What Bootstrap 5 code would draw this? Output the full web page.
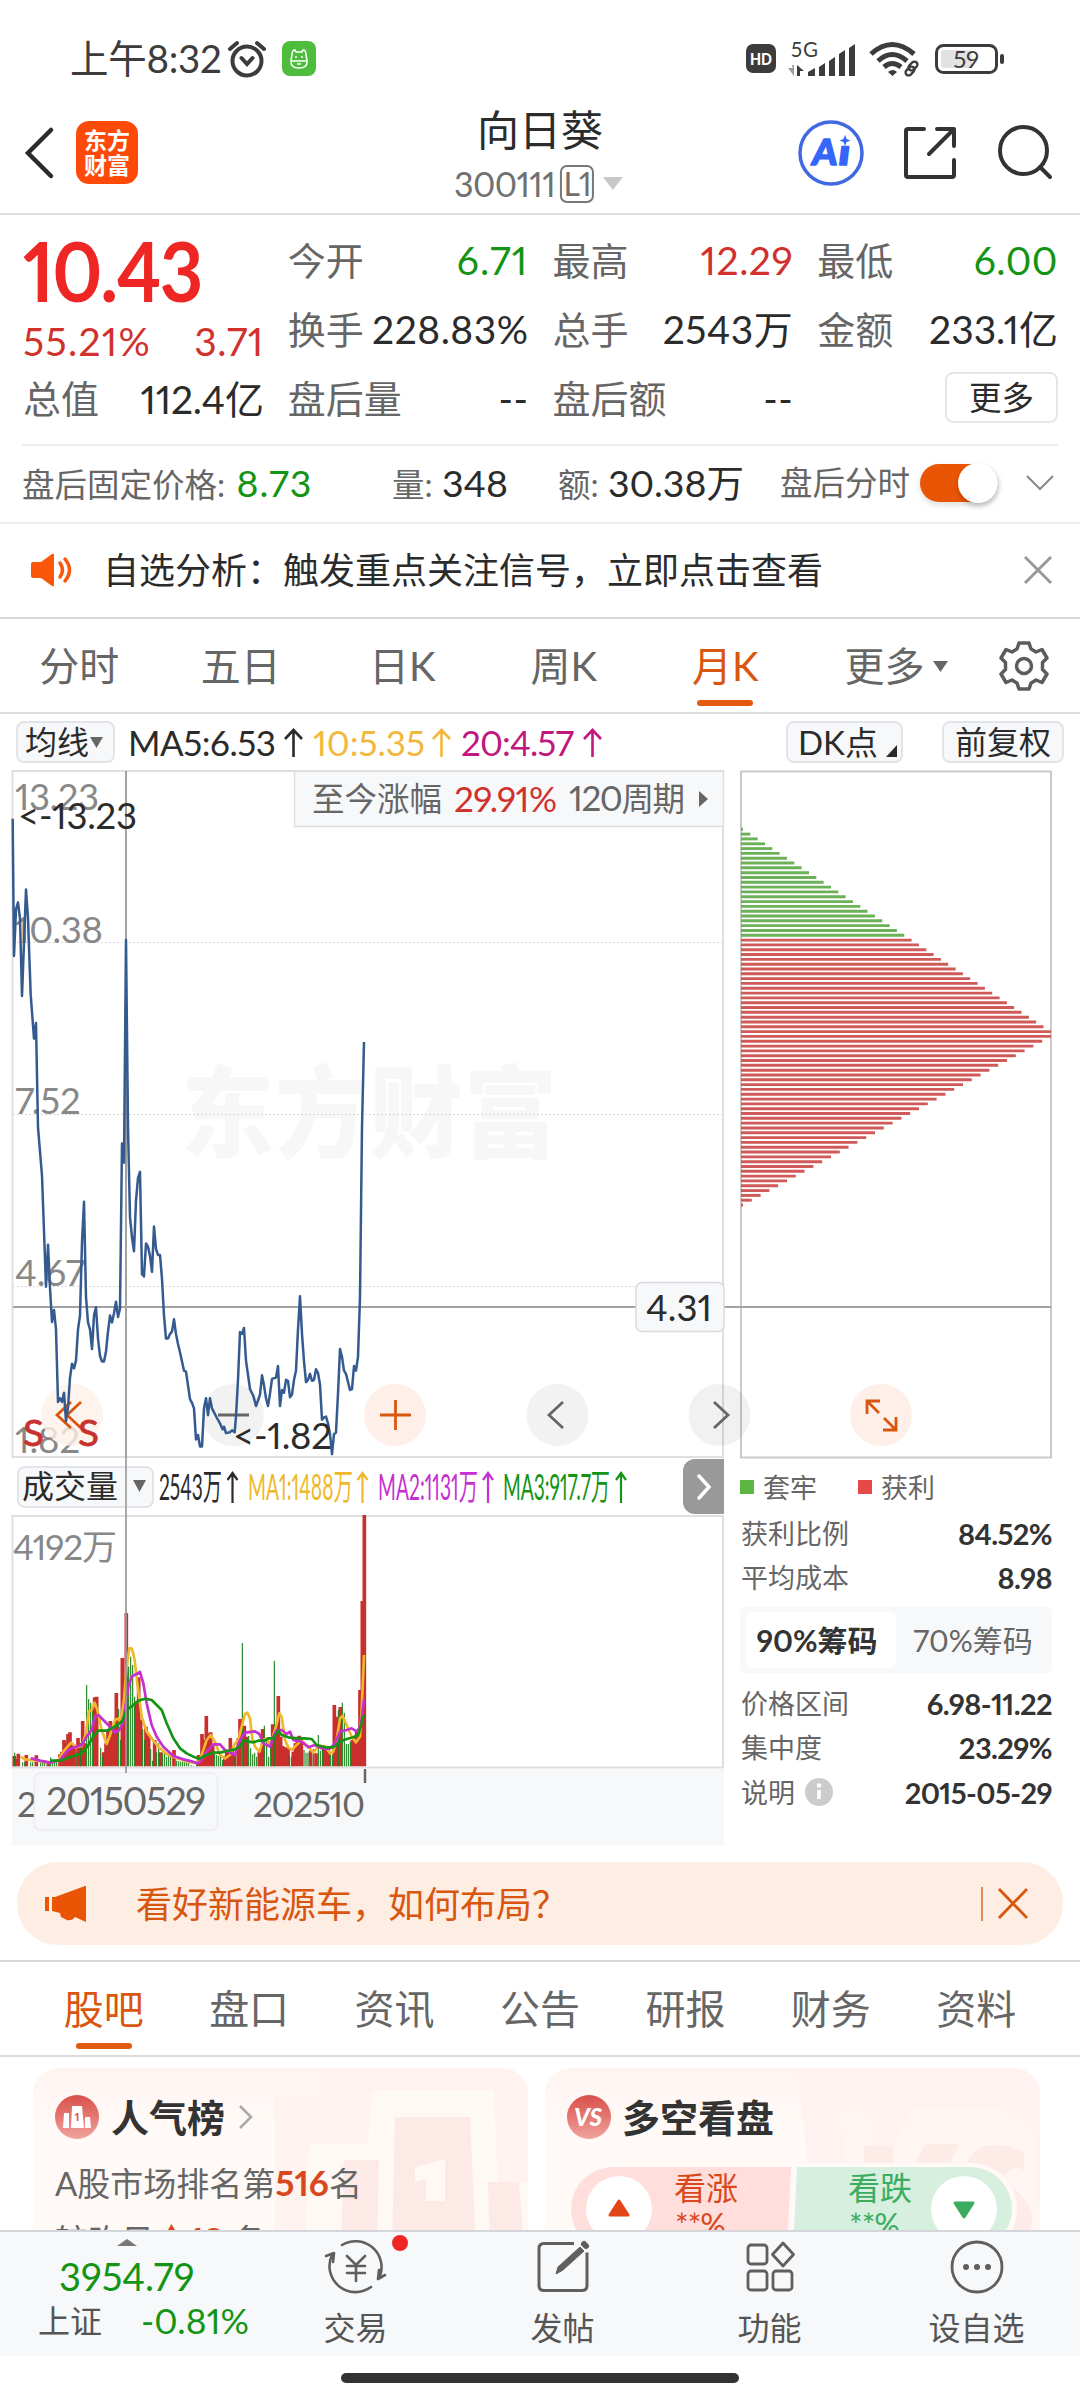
<!DOCTYPE html>
<html lang="zh-CN">
<head>
<meta charset="utf-8">
<meta name="viewport" content="width=device-width, initial-scale=1">
<title>向日葵 300111</title>
<link href="https://cdn.jsdelivr.net/npm/bootstrap@5.3.0/dist/css/bootstrap.min.css" rel="stylesheet">
<script src="https://cdn.jsdelivr.net/npm/bootstrap@5.3.0/dist/js/bootstrap.bundle.min.js"></script>
<style>
:root{--ink:#2b2b2b;--sub:#666;--up:#d0312d;--down:#149414;--brand:#d9560f}
body{width:1080px;height:2400px;overflow:hidden;background:#fff;color:var(--ink);font-family:Lato,"Noto Sans CJK SC",sans-serif;font-variant-numeric:proportional-nums;font-size:38px;line-height:1}
svg{display:block;flex:none;overflow:visible}
.c-sub{color:var(--sub)}.c-up{color:var(--up)}.c-down{color:var(--down)}.c-brand{color:var(--brand)}
.f32{font-size:32px}.f36{font-size:36px}
.statusbar{height:106px;padding:11px 75px 0 70px;color:#3c3c3c;font-size:38.5px;letter-spacing:-.3px}
.topbar{height:109px;border-bottom:2px solid #dcdcdc;padding:0 28px 0 25px}
.stock-name{font-size:42px;line-height:49px}
.stock-code{font-size:34px;height:57px;color:#707070;letter-spacing:-.6px}
.lv{border:2px solid #777;border-radius:7px;font-size:32px;height:38px;line-height:34px;width:34px;text-align:center;letter-spacing:-1px}
.quote{height:229px;padding:10px 23px 0;display:grid;grid-template-columns:repeat(4,1fr);column-gap:25px}
.quote .q-line{height:69px;white-space:nowrap}
.num{font-size:39px;letter-spacing:.5px;margin-right:-1px;position:relative;top:1px}
.price{font-size:82px;font-weight:700;color:#ee2624;height:86px;line-height:91px;letter-spacing:-2px;transform:scaleX(.92);transform-origin:0 0}
.more-btn{width:113px;height:51px;border:2px solid #e6e6e6;border-radius:8px;font-size:32.5px;line-height:45px;padding:0;color:var(--ink)}
.after{height:78px;margin:0 22px;border-top:2px solid #eee;font-size:32.5px;padding-bottom:2px}
.after b{font-weight:400;font-size:37.5px;color:var(--ink);margin-left:1px}
.after b.c-down{color:var(--down);letter-spacing:1px;margin-left:3px}
.knob{width:78px;height:38px;border-radius:19px;background:#e95504;box-shadow:0 3px 6px #0002}
.knob i{display:block;width:40px;height:40px;margin:-1px 0 0 auto;border-radius:50%;background:#fff;box-shadow:0 3px 5px #0003}
.notice{height:97px;border-top:2px solid #eee;border-bottom:2px solid #d8d8d8;padding:0 28px 2px 30px}
.k-tabs{height:95px;border-bottom:2px solid #dcdcdc;font-size:40px;color:var(--sub)}
.k-tabs .k-tab{width:161.5px;height:94px;line-height:94px;text-align:center;position:relative;left:-1.5px}
.k-tab.on,.s-tab.on{color:var(--brand)}
.k-tab.on::after,.s-tab.on::after{content:"";position:absolute;left:50%;bottom:7px;width:56px;height:6px;margin-left:-28px;border-radius:3px;background:#e25a10}
.ma-row{height:56px;padding:0 16px;font-size:34px}
.chip{background:#f7f8fa;border:2px solid #e3e4ea;border-radius:8px;height:42px;font-size:32px;color:var(--ink)}
.lower{height:388px}
.vol-head{height:57px;position:relative;padding-left:17px}
.vol-head .cross{position:absolute;left:125px;top:0;width:2px;height:57px;background:#aaa}
.vol-head .nextbtn{margin-left:auto;width:41px;height:55px;background:#999;border-radius:12px 0 0 12px}
.stats{width:312px;margin-left:16px;font-size:27px;color:var(--sub)}
.stats .s-row span{margin-left:1px}
.stats b{color:#333;font-size:29px;font-weight:700;letter-spacing:-.6px}
.stats .s-row{height:44.5px}
.sq{width:14px;height:14px;display:inline-block}
.seg{height:66px;background:#f7f8fa;border-radius:6px;padding:5px 6px;font-size:30px;margin:7px 0 8px}
.seg .seg-on{width:150px;height:56px;background:#fff;border-radius:6px;color:#333;font-weight:700;padding-right:8px}
.promo{height:83px;margin:16px 17px 0;border-radius:41px;background:#fdede3;color:var(--brand);padding:0 34px 0 28px}
.s-tabs{height:97px;margin-top:15px;border-top:2px solid #d8d8d8;border-bottom:2px solid #dcdcdc;padding:0 31px;font-size:40px;color:var(--sub)}
.s-tab{flex:1;height:93px;line-height:94px;text-align:center;position:relative}
.s-tab.on::after{bottom:6px}
.cards{height:173px;padding:11px 33px 0;overflow:hidden}
.tile{width:495px;height:230px;border-radius:26px;position:relative;overflow:hidden;background:linear-gradient(#fff4f2,#fffaf7 60px,#fffaf6)}
.tile>.bgart{position:absolute;right:0;top:0}
.tile .t-body{position:relative;padding:21px 22px}
.tile h5{font-size:38px;font-weight:700;color:#333;margin:0;line-height:56px}
.rank{font-size:33px;line-height:58px;height:57px;color:var(--sub)}
.rank b{color:#d9481c;font-size:35px}
.bottomnav{height:126px;border-top:2px solid #d5d6da;background:#f7f8fa;font-size:32px;color:#555}
.bottomnav .b-item{width:207px;text-align:center;position:relative}
.b-label{line-height:54px;margin-top:6px}
.reddot{position:absolute;left:140px;top:3px;width:16px;height:16px;border-radius:50%;background:#ee2624}
.homebar{width:398px;height:10px;border-radius:5px;background:#333;margin:17px auto 0}
</style>
</head>
<body>
<div class="statusbar d-flex align-items-center">
  <span>上午8:32</span>
  <svg style="margin-left:6px" width="40" height="38" viewBox="0 0 40 38" fill="none" stroke="#3c3c3c" stroke-width="4" stroke-linecap="round"><circle cx="20" cy="21" r="14.5"/><path d="M14.500 18l5.500 6 5.500-6M3 9l7-6M37 9l-7-6"/></svg>
  <svg style="margin-left:15px" width="34" height="35" viewBox="0 0 34 35"><rect width="34" height="35" rx="8" fill="#4fbd3c"/><g fill="none" stroke="#fff" stroke-width="1.500"><path d="M10 14q0-5 3-5l1 2h6l1-2q3 0 3 5l1 5v2q0 6-8 6t-8-6v-2zM9 20h16"/><path d="M14 15v2M20 15v2M15 23h4"/></g></svg>
  <svg class="ms-auto" width="30" height="29" viewBox="0 0 30 29"><rect width="30" height="29" rx="7" fill="#3c3c3c"/><text x="4" y="20.500" font-size="17" font-weight="900" fill="#fff" textLength="22" lengthAdjust="spacingAndGlyphs" letter-spacing="0">HD</text></svg>
  <svg style="margin-left:12px" width="68" height="38" viewBox="0 0 68 38" fill="#3c3c3c"><text x="3" y="16.500" font-size="20.500" textLength="27" letter-spacing="0">5G</text><path d="M0 28h6v8zM4 25h2v10z" opacity=".5"/><path d="M9 25l7 6h-4v5H9zM20 36v-4l7-4v8zM31 36V27l6-4v13zM41 36V21l6-4v19zM51 36V14l6-4v26zM61 36V8l6-4v32z"/></svg>
  <svg style="margin-left:13px" width="52" height="36" viewBox="0 0 52 36" fill="none" stroke="#3c3c3c" stroke-width="5"><path d="M2 13q21-19 43 0M9 20q14-13 29 0M15 26q8-7 17 0"/><path d="M19 31q5-4 9 0l-4.500 4z" fill="#3c3c3c" stroke="none"/><g stroke-width="2.400"><rect x="41" y="20" width="6" height="10" rx="3" transform="rotate(45 44 25)"/><rect x="38" y="25" width="6" height="10" rx="3" transform="rotate(45 41 30)"/></g></svg>
  <svg style="margin-left:14px" width="70" height="30" viewBox="0 0 70 30"><rect x="1.500" y="1.500" width="60" height="27" rx="7" fill="none" stroke="#3c3c3c" stroke-width="3"/><rect x="6" y="6" width="31" height="18" rx="3" fill="#e2e2e2"/><rect x="65" y="10" width="4" height="10" rx="2" fill="#3c3c3c"/><text x="31" y="23.500" font-size="24" fill="#3c3c3c" text-anchor="middle">59</text></svg>
</div>

<header class="topbar d-flex position-relative">
  <svg style="margin-top:22px" width="30" height="50" viewBox="0 0 30 50" fill="none" stroke="#2b2b2b" stroke-width="4.500" stroke-linecap="round"><path d="M26 2L3 25l23 23"/></svg>
  <svg style="margin:15px 0 0 21px" width="62" height="63" viewBox="0 0 62 63"><rect width="62" height="63" rx="13" fill="#fd4a08"/><g fill="#fff" font-size="23" font-weight="700" text-anchor="middle"><text x="31" y="28">东方</text><text x="31" y="53">财富</text></g></svg>
  <div class="position-absolute start-50 translate-middle-x text-center">
    <div class="stock-name">向日葵</div>
    <div class="stock-code d-flex align-items-center justify-content-center"><span>300111</span><span class="lv" style="margin-left:5px">L1</span><svg style="margin:0 3px 0 9px" width="20" height="13"><path d="M0 0h20L10 13z" fill="#c8c8c8"/></svg></div>
  </div>
  <svg class="ms-auto" style="margin-top:15px" width="254" height="66" viewBox="798 121 254 66" fill="none" stroke="#333" stroke-width="4" stroke-linecap="round" stroke-linejoin="round"><circle cx="831" cy="153" r="31" stroke="#4169e1" stroke-width="3.500"/><g fill="#3466fa" stroke="#3466fa" stroke-width="1.500" font-size="36" font-weight="900"><text transform="translate(811 165) skewX(-7)" textLength="25" lengthAdjust="spacingAndGlyphs">A</text><text transform="translate(837 165) skewX(-7)" textLength="12" lengthAdjust="spacingAndGlyphs">ı</text></g><path d="M845 135l1.600 3.900 3.900 1.600-3.900 1.600-1.600 3.900-1.600-3.900-3.900-1.600 3.900-1.600z" fill="#3466fa" stroke="none"/><path d="M924 129h-16q-2 0-2 2v44q0 2 2 2h44q2 0 2-2v-15M937 129h17v17M953 130l-24 24"/><circle cx="1023.500" cy="150.500" r="23.500"/><path d="M1040 167l10 10"/></svg>
</header>

<section class="quote">
  <div>
    <div class="price">10.43</div>
    <div class="d-flex justify-content-between align-items-center c-up" style="height:58px"><span class="num" style="letter-spacing:1.3px">55.21%</span><span class="num">3.71</span></div>
    <div class="d-flex justify-content-between align-items-center" style="height:58px"><span class="c-sub">总值</span><span class="num" style="letter-spacing:-.2px">112.4亿</span></div>
  </div>
  <div>
    <div class="q-line d-flex justify-content-between align-items-center"><span class="c-sub">今开</span><span class="c-down num" style="letter-spacing:1.2px">6.71</span></div>
    <div class="q-line d-flex justify-content-between align-items-center"><span class="c-sub">换手</span><span class="num">228.83%</span></div>
    <div class="q-line d-flex justify-content-between align-items-center"><span class="c-sub">盘后量</span><span class="num">--</span></div>
  </div>
  <div>
    <div class="q-line d-flex justify-content-between align-items-center"><span class="c-sub">最高</span><span class="c-up num">12.29</span></div>
    <div class="q-line d-flex justify-content-between align-items-center"><span class="c-sub">总手</span><span class="num">2543万</span></div>
    <div class="q-line d-flex justify-content-between align-items-center"><span class="c-sub">盘后额</span><span class="num">--</span></div>
  </div>
  <div>
    <div class="q-line d-flex justify-content-between align-items-center"><span class="c-sub">最低</span><span class="c-down num">6.00</span></div>
    <div class="q-line d-flex justify-content-between align-items-center"><span class="c-sub">金额</span><span class="num" style="letter-spacing:0">233.1亿</span></div>
    <div class="q-line d-flex justify-content-end align-items-center"><button class="btn more-btn" style="margin-right:-1px">更多</button></div>
  </div>
</section>

<section class="after d-flex align-items-center c-sub text-nowrap">
  <span style="width:370px">盘后固定价格: <b class="c-down">8.73</b></span>
  <span style="width:166px">量: <b>348</b></span>
  <span style="width:222px">额: <b>30.38万</b></span>
  <span style="width:140px">盘后分时</span>
  <span class="knob"><i></i></span>
  <svg class="ms-auto me-1" width="28" height="16" viewBox="0 0 28 16" fill="none" stroke="#888" stroke-width="2"><path d="M1 1l13 13L27 1"/></svg>
</section>

<section class="notice d-flex align-items-center f36">
  <svg width="44" height="36" viewBox="0 0 44 36"><path d="M3 10h8L22 2q2-1 2 1v30q0 2-2 1L11 26H3q-2 0-2-2V12q0-2 2-2z" fill="#fb560a"/><path d="M30 11q5 7 0 14M35 7q9 11 0 22" fill="none" stroke="#fb560a" stroke-width="3.500" stroke-linecap="round"/></svg>
  <span style="margin-left:29px">自选分析：触发重点关注信号，立即点击查看</span>
  <svg class="ms-auto" width="28" height="28" viewBox="0 0 28 28" stroke="#999" stroke-width="3"><path d="M1 1l26 26M27 1L1 27"/></svg>
</section>

<nav class="k-tabs d-flex">
  <div class="k-tab">分时</div><div class="k-tab">五日</div><div class="k-tab">日K</div><div class="k-tab">周K</div><div class="k-tab on">月K</div>
  <div class="k-tab d-flex align-items-center justify-content-center" style="width:180px">更多<svg class="ms-2" width="15" height="11"><path d="M0 0h15L7.500 11z" fill="#666"/></svg></div>
  <svg style="margin:21px 0 0 11px" width="50" height="52" viewBox="-25 -26 50 52" fill="none" stroke="#5c5c5c" stroke-width="3.500" stroke-linejoin="round"><path d="M-5-23H5L7-17Q9-16 12-14L18-16.500 23-8 18.500-3.500V3.500L23 8 18 16.500 12 14Q9 16 7 17L5 23H-5L-7 17Q-9 16-12 14L-18 16.500-23 8-18.500 3.500V-3.500L-23-8-18-16.500-12-14Q-9-16-7-17Z"/><circle r="7.500"/></svg>
</nav>

<div class="ma-row d-flex align-items-center text-nowrap">
  <span class="chip d-flex align-items-center" style="width:99px;padding-left:7px">均线<svg style="margin-left:1px" width="13" height="11"><path d="M0 0h13L6.500 11z" fill="#666"/></svg></span>
  <svg style="margin-left:13px" width="480" height="40" viewBox="128 722 480 40" font-size="35"><text x="128" y="756" fill="#2b2b2b" textLength="148">MA5:6.53</text><text x="313" y="756" fill="#f0b83c" textLength="112">10:5.35</text><text x="461" y="756" fill="#c0187e" textLength="113">20:4.57</text><g fill="none" stroke-width="2.600"><path stroke="#2b2b2b" d="M293.500 757V731M285 739l8.500-9 8.500 9"/><path stroke="#f0b83c" d="M441.500 757V731M433 739l8.500-9 8.500 9"/><path stroke="#c0187e" d="M592.500 757V731M584 739l8.500-9 8.500 9"/></g></svg>
  <span class="chip d-flex align-items-center ms-auto" style="width:117px;padding-left:10px;font-size:33px">DK点<svg class="align-self-end mb-1" style="margin-left:8px" width="11" height="12"><path d="M11 0v12H0z" fill="#2b2b2b"/></svg></span>
  <span class="chip d-flex align-items-center justify-content-center" style="width:122px;margin-left:39px">前复权</span>
</div>

<svg width="1080" height="688" viewBox="0 770 1080 688" font-size="36.500">
  <g transform="translate(181 1150) scale(1 1.08)"><text font-size="93" font-weight="900" fill="#f7f7f7" textLength="376">东方财富</text></g>
  <g fill="none" stroke="#d8d8d8" stroke-width="1.200" stroke-dasharray="2 2"><path d="M13 942.500H723M13 1114.500H723M13 1286.500H723"/></g>
  <path fill="none" stroke="#dfdfe1" stroke-width="2" d="M12.500 771H723V1457H12.500Z"/>
  <path fill="none" stroke="#c9c9c9" stroke-width="2" d="M741 771.500H1051V1457.500H741Z"/>
  <g id="chips" stroke-width="2.900"></g>
  <path stroke="#a2a2a2" stroke-width="2" d="M126 771V1458M13 1307H1051"/>
  <g fill="#888"><text x="15" y="810" textLength="84">13.23</text><text x="15" y="943" textLength="88">10.38</text><text x="15" y="1114">7.52</text><text x="15" y="1286">4.67</text><text x="15" y="1453">1.82</text></g>
  <g fill="none"><circle cx="72" cy="1415" r="31" fill="#fef0e8" fill-opacity=".8"/><circle cx="233" cy="1415" r="31" fill="#f2f2f2"/><circle cx="395" cy="1415" r="31" fill="#fef0e8"/><circle cx="557.500" cy="1415" r="31" fill="#f2f2f2"/><circle cx="719.500" cy="1415" r="31" fill="#000" fill-opacity=".055"/><circle cx="881" cy="1415" r="31" fill="#fef0e8"/>
  <g stroke-width="2.800"><path stroke="#d9560f" d="M71 1402l-14 13 14 13M81 1402l-14 13 14 13M380 1415h31M395.500 1400v30M867 1414v-13h13M867 1401l12 12M896 1417v13h-13M896 1430l-12-12"/><path stroke="#666" d="M218 1415h31M563 1402l-14 13 14 13M714 1402l14 13-14 13"/></g></g>
  <g transform="translate(0 760) scale(.33333 .45915)"><path vector-effect="non-scaling-stroke" fill="none" stroke="#345a90" stroke-width="2.500" stroke-linejoin="round" d="M38 128 42 427 48 325 54 310 60 345 66 514 78 282 84 345 92 510 102 607 108 573 114 800 126 905 138 1147 144 1056 150 1150 156 1224 162 1198 168 1240 174 1398 180 1390 186 1398 192 1378 198 1440 204 1410 210 1345 216 1315 222 1325 228 1308 234 1240 240 1210 246 1050 252 962 258 1170 264 1225 270 1240 276 1283 282 1210 288 1192 294 1260 300 1298 306 1310 312 1310 318 1288 324 1245 330 1210 336 1225 342 1205 348 1180 354 1213 360 1195 366 835 372 877 378 392 384 800 390 995 396 1040 402 1070 408 960 414 910 420 897 426 1120 432 1125 438 1053 444 1060 450 1080 456 1115 462 1016 468 1065 474 1078 480 1078 486 1130 492 1210 498 1260 504 1260 510 1250 516 1245 522 1218 528 1250 534 1272 540 1290 546 1310 552 1330 558 1332 564 1362 570 1392 576 1400 582 1412 588 1480 594 1470 600 1495 606 1495 612 1412 618 1390 624 1427 630 1390 636 1412 650 1432 660 1445 668 1458 672 1452 678 1466 690 1464 696 1460 704 1464 708 1430 714 1350 720 1246 726 1250 732 1237 738 1308 750 1370 760 1385 768 1407 774 1395 780 1382 786 1340 792 1362 798 1390 804 1407 810 1380 816 1348 828 1345 834 1320 840 1407 846 1372 852 1378 858 1350 864 1352 870 1388 876 1382 882 1350 888 1330 894 1240 900 1168 906 1250 912 1310 918 1355 924 1350 930 1337 936 1352 942 1350 948 1327 954 1335 960 1360 966 1437 972 1432 978 1430 984 1445 990 1468 996 1512 1002 1468 1008 1465 1014 1380 1020 1283 1026 1300 1032 1330 1038 1337 1050 1372 1056 1370 1062 1320 1068 1330 1074 1300 1080 1170 1086 800 1092 614"/></g>
  <g fill="#2b2b2b"><text x="18" y="829" textLength="119">&lt;-13.23</text><text x="233" y="1449" textLength="99">&lt;-1.82</text></g>
  <g fill="#c8312e" stroke="#c8312e" stroke-width=".8"><text x="23" y="1446" textLength="21" lengthAdjust="spacingAndGlyphs">S</text><text x="78" y="1446" textLength="21" lengthAdjust="spacingAndGlyphs">S</text></g>
  <g font-size="32.500" fill="#666"><rect x="294.500" y="771.500" width="429" height="55" fill="#f7f8fa" stroke="#dfdfe1" stroke-width="1.500"/><text x="312" y="811">至今涨幅</text><text x="454" y="812" font-size="35" fill="#d0312d" textLength="103">29.91%</text><text x="569" y="811" textLength="116"><tspan font-size="35">120</tspan>周期</text><path d="M699 791v16l9-8z"/></g>
  <rect x="636" y="1282.500" width="88" height="49" rx="6" fill="#f7f8fa" stroke="#d8dade" stroke-width="1.500"/><text x="646" y="1321" fill="#2b2b2b" textLength="66">4.31</text>
</svg>

<div class="lower d-flex">
  <div style="width:724px">
    <div class="vol-head d-flex align-items-center">
      <span class="chip d-flex align-items-center" style="width:137px;padding:0 0 1px 3px">成交量<svg style="margin-left:15px" width="13" height="12"><path d="M0 0h13L6.500 12z" fill="#666"/></svg></span>
      <svg style="margin-left:4px" width="480" height="44" viewBox="158 1465 480 44" font-size="36"><g><text x="159" y="1500" fill="#2b2b2b" textLength="63" lengthAdjust="spacingAndGlyphs">2543万</text><text x="248" y="1500" fill="#efb82a" textLength="105" lengthAdjust="spacingAndGlyphs">MA1:1488万</text><text x="378" y="1500" fill="#c62fd0" textLength="100" lengthAdjust="spacingAndGlyphs">MA2:1131万</text><text x="503" y="1500" fill="#149414" textLength="107" lengthAdjust="spacingAndGlyphs">MA3:917.7万</text></g><g fill="none" stroke-width="2.200"><path stroke="#2b2b2b" d="M232.500 1503v-29M227.500 1480l5-7 5 7"/><path stroke="#efb82a" d="M362.500 1503v-29M357.500 1480l5-7 5 7"/><path stroke="#c62fd0" d="M488 1503v-29M483 1480l5-7 5 7"/><path stroke="#149414" d="M621 1503v-29M616 1480l5-7 5 7"/></g></svg>
      <span class="nextbtn d-flex align-items-center justify-content-center"><svg width="16" height="26" viewBox="0 0 16 26" fill="none" stroke="#fff" stroke-width="3.500" stroke-linecap="round"><path d="M3 2l10 11L3 24"/></svg></span>
      <i class="cross"></i>
    </div>
    <svg width="724" height="331" viewBox="0 1515 724 331">
      <rect x="12" y="1769" width="712" height="77" fill="#f7f8fa"/>
      <path d="M12.500 1516H723V1767.500H12.500Z" fill="none" stroke="#dfdfe1" stroke-width="2"/>
      <g transform="translate(0 1510) scale(.33333)" fill="none" stroke-linejoin="round">
        <path stroke="#c9302c" stroke-width="11" d="M43 769V738M49 769V747M55 769V731M79 769V735M109 769V736M145 769V757M180 769V733M186 769V725M192 769V690M198 769V700M204 769V672M210 769V667M216 769V700M222 769V715M234 769V684M240 769V700M248 769V633M254 769V700M284 769V562M290 769V560M311 769V727M318 769V700M324 769V660M331 769V633M339 769V655M349 769V549M367 769V444M373 769V500M379 769V309M409 769V575M416 769V502M422 769V629M438 769V650M446 769V672M464 769V690M482 769V727M522 769V720M596 769V735M606 769V672M612 769V690M619 769V618M625 769V670M632 769V667M638 769V705M674 769V738M680 769V725M691 769V684M697 769V715M703 769V735M715 769V684M720 769V627M733 769V647M739 769V680M778 769V725M788 769V657M818 769V643M829 769V660M835 769V558M842 769V680M848 769V708M856 769V712M864 769V715M880 769V725M886 769V700M892 769V680M898 769V677M904 769V685M932 769V722M948 769V730M972 769V710M978 769V712M985 769V715M1003 769V585M1010 769V620M1021 769V591M1057 769V690M1063 769V680M1070 769V665M1080 769V540M1087 769V273M1093 769V15"/>
        <path stroke="#197f19" stroke-width="3.300" d="M44 769V728M68 769V757M74 769V757M92 769V757M98 769V757M122 769V758M128 769V757M134 769V758M152 769V742M158 769V757M164 769V757M170 769V757M228 769V728M242 769V700M260 769V525M266 769V568M272 769V578M278 769V590M302 769V713M308 769V740M356 769V597M362 769V690M386 769V470M392 769V440M398 769V465M404 769V560M428 769V658M434 769V690M452 769V717M458 769V752M470 769V727M476 769V700M488 769V730M494 769V727M500 769V740M506 769V733M512 769V738M530 769V752M536 769V754M542 769V755M548 769V754M554 769V757M560 769V758M566 769V757M574 769V766M580 769V767M590 769V757M644 769V733M650 769V735M656 769V738M662 769V730M668 769V750M705 769V735M727 769V399M746 769V678M752 769V715M758 769V733M764 769V728M770 769V740M793 769V647M800 769V690M806 769V740M812 769V710M823 769V452M868 769V735M874 769V740M912 769V720M918 769V728M924 769V728M940 769V718M955 769V675M961 769V722M967 769V715M991 769V728M997 769V735M1015 769V600M1027 769V578M1033 769V608M1039 769V702M1045 769V702M1051 769V695"/>
        <path stroke="#efb82a" stroke-width="8" d="M62 740 75 748 90 750 150 757 175 750 190 725 213 698 230 712 245 708 258 670 266 605 275 600 284 578 292 600 305 660 320 702 332 670 345 630 355 625 362 640 372 570 380 470 388 415 396 416 404 450 412 520 425 620 440 665 460 692 480 715 500 732 520 740 540 748 560 754 580 758 598 755 610 720 620 690 632 675 645 695 660 735 675 745 690 735 705 700 715 690 725 650 735 612 742 608 750 625 757 685 765 710 778 725 790 690 800 685 808 705 815 690 825 660 838 610 845 620 855 690 865 712 875 720 885 710 903 692 920 705 940 728 955 708 975 708 990 730 1000 725 1010 690 1020 625 1028 618 1040 645 1055 680 1068 697 1080 680 1085 600 1092 435"/>
        <path stroke="#c62fd0" stroke-width="8" d="M92 745 120 752 150 758 180 750 200 725 215 715 245 705 260 680 275 660 285 620 295 615 310 630 325 645 345 668 358 660 368 640 375 600 385 530 395 500 420 486 430 520 440 580 455 645 470 680 490 710 520 738 550 748 575 754 590 760 600 756 620 725 640 703 660 703 675 720 690 728 705 735 720 690 735 668 765 664 778 672 790 700 800 705 810 710 820 680 830 660 845 660 860 672 870 665 880 690 905 695 925 712 945 705 965 715 990 716 1005 700 1020 665 1040 660 1055 655 1070 664 1082 650 1092 568"/>
        <path stroke="#149414" stroke-width="8" d="M150 752 180 752 215 740 245 730 262 710 280 680 295 662 320 662 345 650 365 635 380 600 400 585 415 572 435 566 455 570 470 585 485 600 500 640 520 685 540 715 560 730 580 740 598 746 620 735 640 728 660 728 680 723 705 718 720 708 732 692 760 697 775 692 795 692 805 685 820 685 835 662 845 675 865 682 890 685 915 685 935 687 950 705 975 712 1000 712 1020 695 1040 687 1060 682 1075 675 1082 650 1092 615"/>
      </g>
      <text x="13" y="1560" font-size="35" fill="#888" textLength="104">4192万</text>
      <path stroke="#666" stroke-width="2.500" d="M365 1769v14"/>
      <g fill="#666"><text x="17" y="1817" font-size="35">2</text><rect x="34.500" y="1773" width="183" height="57" rx="6" fill="#f7f8fa" stroke="#ececef" stroke-width="1.500"/><text x="46" y="1815" font-size="38" textLength="160">20150529</text><text x="253" y="1817" font-size="35" textLength="112">202510</text></g>
      <path stroke="#999" stroke-opacity=".85" stroke-width="2" d="M126 1515V1773"/>
    </svg>
  </div>
  <div class="stats">
    <div class="d-flex align-items-center" style="height:53px;padding-top:5px"><i class="sq" style="background:#5db544"></i><span style="margin-left:9px;width:95px">套牢</span><i class="sq" style="background:#e64a48"></i><span style="margin-left:9px">获利</span></div>
    <div class="s-row d-flex align-items-center justify-content-between"><span>获利比例</span><b>84.52%</b></div>
    <div class="s-row d-flex align-items-center justify-content-between"><span>平均成本</span><b>8.98</b></div>
    <div class="seg d-flex align-items-center"><div class="seg-on d-flex align-items-center justify-content-center">90%筹码</div><div class="flex-fill text-center ps-1">70%筹码</div></div>
    <div class="s-row d-flex align-items-center justify-content-between"><span>价格区间</span><b>6.98-11.22</b></div>
    <div class="s-row d-flex align-items-center justify-content-between"><span>集中度</span><b>23.29%</b></div>
    <div class="s-row d-flex align-items-center"><span>说明</span><svg style="margin-left:10px" width="28" height="28" viewBox="0 0 28 28"><circle cx="14" cy="14" r="14" fill="#ccc"/><path d="M14 12v9" stroke="#fff" stroke-width="3.500"/><circle cx="14" cy="7.500" r="2.200" fill="#fff"/></svg><b class="ms-auto">2015-05-29</b></div>
  </div>
</div>

<div class="promo d-flex align-items-center f36">
  <svg width="42" height="38" viewBox="0 0 42 38" fill="#e95504"><path d="M0 12h4v14H0zM7 12h3L40 1h1v36l-11-5q-3 4-8 3l-6-3-1-4-8-2z"/></svg>
  <span style="margin-left:49px">看好新能源车，如何布局？</span>
  <svg class="ms-auto" width="48" height="36" viewBox="981 1886 48 36" stroke="#d9560f" fill="none"><path d="M982 1887v34" stroke-width="1.300"/><path d="M999 1889l28 29M1027 1889l-28 29" stroke-width="2.800"/></svg>
</div>

<nav class="s-tabs d-flex">
  <div class="s-tab on">股吧</div><div class="s-tab">盘口</div><div class="s-tab">资讯</div><div class="s-tab">公告</div><div class="s-tab">研报</div><div class="s-tab">财务</div><div class="s-tab">资料</div>
</nav>

<section class="cards d-flex">
  <div class="tile flex-shrink-0">
    <svg class="bgart" width="260" height="180" viewBox="268 0 260 180"><path fill="#fff2ef" d="M321 0h207v180H275V28h44z"/><path fill="#fff9f6" d="M372 22h122l4 92h30v66H305l4-104h59z"/><path fill="#fff2ef" d="M494 22h34v92h-30z"/><g fill="#fde9e6"><path d="M395 49h75l6 131h-84zM344 92h35l-2 88h-36zM488 114h31l5 66h-34z"/></g><path fill="#fff8f5" d="M445 91v42h-19v-22l-11 3v-15z"/></svg>
    <div class="t-body">
      <div class="d-flex align-items-center"><svg width="44" height="44" viewBox="0 0 44 44"><defs><linearGradient id="rg" x2="0" y2="1"><stop stop-color="#d94f4a"/><stop offset="1" stop-color="#f0a29d"/></linearGradient></defs><circle cx="22" cy="22" r="22" fill="url(#rg)"/><path fill="#fff" d="M9 18h5v15H8zM17 11h10l2 22H16zM30 22h5l1 11h-6z"/><text x="22" y="26" font-size="12" font-weight="900" fill="#d9605a" text-anchor="middle">1</text></svg><h5 style="margin-left:12px">人气榜</h5><svg style="margin-left:14px" width="14" height="24" viewBox="0 0 14 24" fill="none" stroke="#aaa" stroke-width="2.500"><path d="M1 1l11 11L1 23"/></svg></div>
      <div class="rank" style="margin-top:8px">A股市场排名第<b>516</b>名</div>
      <div class="rank">较昨日<b>▲12</b> 名</div>
    </div>
  </div>
  <div class="tile flex-shrink-0" style="margin-left:17px">
    <svg class="bgart" width="260" height="180" viewBox="780 0 260 180"><path fill="#fff2f0" d="M798 0h242v180H815z"/><path fill="#fff8f5" d="M840 42h30l4 70 40-72h60q50-2 62 30l4 110H850z" opacity=".7"/><g fill="#fdebe8"><path d="M864 78h29l2 60 30-62h34l-55 120h-36z"/><path d="M1024 84q-40-18-56 8-6 24 14 34 18 10 0 22-12 6-30-4v36h66q28-30 0-56-22-14-8-22 8-4 14 0z"/></g></svg>
    <div class="t-body">
      <div class="d-flex align-items-center"><svg width="44" height="44" viewBox="0 0 44 44"><circle cx="22" cy="22" r="22" fill="url(#rg)"/><text x="7" y="31" font-size="25" font-weight="900" font-style="italic" fill="#fff" textLength="28" lengthAdjust="spacingAndGlyphs">VS</text></svg><h5 style="margin-left:11px">多空看盘</h5></div>
    </div>
    <svg class="position-absolute" style="left:22px;top:93px" width="452" height="110" viewBox="567 2161 452 110"><rect x="567" y="2163" width="450" height="92" rx="46" fill="#fffaf8"/><path d="M613 2167h178l-4 84H613a42 42 0 0 1 0-84z" fill="#ffdedb"/><path d="M797 2167h173a42 42 0 0 1 0 84H793z" fill="#d6efde"/><circle cx="619" cy="2209" r="33" fill="#fff"/><circle cx="964" cy="2209" r="33" fill="#fff"/><path d="M619 2201l9 14h-18z" fill="#e34517" stroke="#e34517" stroke-width="3" stroke-linejoin="round"/><path d="M964 2217l9-14h-18z" fill="#3bac60" stroke="#3bac60" stroke-width="3" stroke-linejoin="round"/><g font-size="32"><g fill="#d9481c"><text x="674" y="2200">看涨</text><text x="675" y="2237" textLength="51">**%</text></g><g fill="#3bac60"><text x="848" y="2200">看跌</text><text x="849" y="2237" textLength="51">**%</text></g></g></svg>
  </div>
</section>

<nav class="bottomnav d-flex position-relative">
  <div style="width:252px;padding-left:38px">
    <svg style="margin:7px 0 0 79px" width="20" height="7"><path d="M10 0l10 7H0z" fill="#777"/></svg>
    <div class="c-down" style="font-size:38px;line-height:52px;margin:4px 0 0 21px">3954.79</div>
    <div class="d-flex align-items-center" style="height:38px;width:211px"><span>上证</span><span class="c-down ms-auto" style="font-size:35.5px">-0.81%</span></div>
  </div>
  <div class="b-item"><i class="reddot"></i><svg class="mx-auto" style="margin-top:7px" width="62" height="56" viewBox="-31 -28 62 56" fill="none" stroke="#5f5f5f" stroke-width="2.600" stroke-linecap="round"><path d="M-14-22A26 26 0 0 1 24 9M22 12l7-4M22 12l1-9M15 20A26 26 0 0 1-24-12M-30-11l8-3M-22-14l-1 9M-9-11l9 9 9-9M0-2v16M-9-1H9M-9 6H9"/></svg><div class="b-label">交易</div></div>
  <div class="b-item"><svg class="mx-auto" style="margin-top:7px" width="56" height="56" viewBox="-28 -28 56 56" fill="none" stroke="#5f5f5f" stroke-width="3"><path d="M11-23.500h-30q-5 0-5 5v37q0 5 5 5h38q5 0 5-5v-33"/><path d="M-7 7l2-7 22-20 4 4L0 3z" fill="#5f5f5f" stroke-width="1"/><path d="M21-23l2 2" stroke-width="6" stroke-linecap="round"/></svg><div class="b-label">发帖</div></div>
  <div class="b-item"><svg class="mx-auto" style="margin-top:7px" width="56" height="56" viewBox="-28 -28 56 56" fill="none" stroke="#5f5f5f" stroke-width="2.800" stroke-linejoin="round"><rect x="-22" y="-22" width="19" height="19" rx="3"/><rect x="-22" y="4" width="19" height="19" rx="3"/><rect x="3" y="4" width="19" height="19" rx="3"/><path d="M13-24L23.500-12.500 13-1 2.500-12.500z"/></svg><div class="b-label">功能</div></div>
  <div class="b-item"><svg class="mx-auto" style="margin-top:7px" width="56" height="56" viewBox="-28 -28 56 56" fill="none" stroke="#5f5f5f" stroke-width="2.800"><circle r="25"/><g fill="#5f5f5f" stroke="none"><circle cx="-11" r="3"/><circle r="3"/><circle cx="11" r="3"/></g></svg><div class="b-label">设自选</div></div>
</nav>
<div class="homebar"></div>

<script>
/* Chip distribution: 79 price levels, trapped holders above, profitable below */
(function(){
  var out='';
  for(var i=0;i<79;i++){
    var w=i<=42?2+i*7.33:310-(i-43)*8.8,y=(829.3+i*4.817).toFixed(1);
    out+='<path d="M741 '+y+'h'+w.toFixed(1)+'" stroke="'+(i<23?'#6bb158':'#cf5a58')+'"/>';
  }
  document.getElementById('chips').innerHTML=out;
})();
</script>
</body>
</html>
